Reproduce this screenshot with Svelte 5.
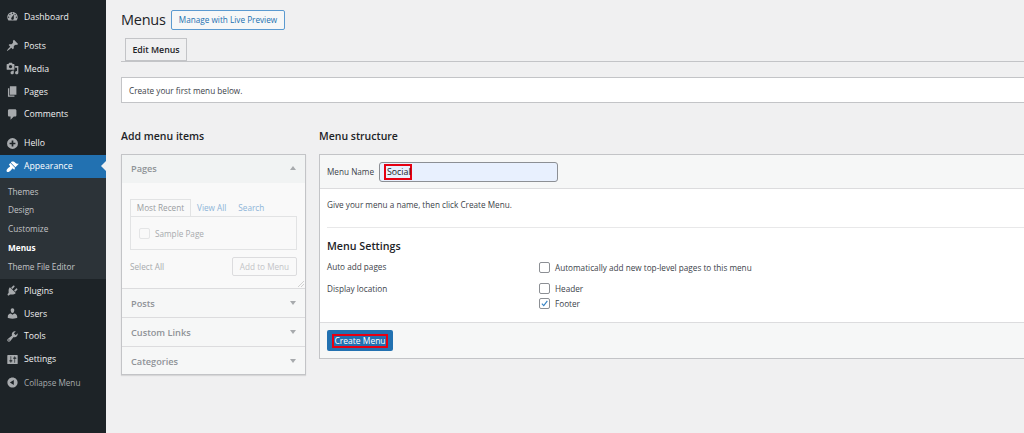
<script>
  const icons = {
    dashboard: 'M3.76 16h12.48c1.1-1.37 1.76-3.11 1.76-5 0-4.42-3.58-8-8-8s-8 3.58-8 8c0 1.89.66 3.63 1.76 5zM10 4c.55 0 1 .45 1 1s-.45 1-1 1-1-.45-1-1 .45-1 1-1zM6 6c.55 0 1 .45 1 1s-.45 1-1 1-1-.45-1-1 .45-1 1-1zm8 0c.55 0 1 .45 1 1s-.45 1-1 1-1-.45-1-1 .45-1 1-1zm-5.37 5.55L12 7v6c0 1.1-.9 2-2 2s-2-.9-2-2c0-.57.24-1.08.63-1.45zM4 10c.55 0 1 .45 1 1s-.45 1-1 1-1-.45-1-1 .45-1 1-1zm12 0c.55 0 1 .45 1 1s-.45 1-1 1-1-.45-1-1 .45-1 1-1z',
    posts: 'M10.44 3.02l1.82-1.82 6.36 6.35-1.83 1.82c-1.05-.68-2.48-.57-3.41.36l-.75.75c-.92.93-1.04 2.35-.35 3.41l-1.83 1.82-2.41-2.41-2.8 2.79c-.42.42-3.38 2.71-3.8 2.29s1.86-3.39 2.28-3.81l2.79-2.79L4.1 9.36l1.83-1.82c1.05.69 2.48.57 3.4-.36l.75-.75c.93-.92 1.05-2.35.36-3.41z',
    media: 'M13 11V4c0-.55-.45-1-1-1h-1.67L9 1H5L3.67 3H2c-.55 0-1 .45-1 1v7c0 .55.45 1 1 1h10c.55 0 1-.45 1-1zM7 4.5c1.38 0 2.5 1.12 2.5 2.5S8.38 9.5 7 9.5 4.5 8.38 4.5 7 5.62 4.5 7 4.5zM14 6h5v10.5c0 1.38-1.12 2.5-2.5 2.5S14 17.88 14 16.5s1.12-2.5 2.5-2.5c.17 0 .34.02.5.05V9h-3V6zm-4 8.05V13h2v3.5c0 1.38-1.12 2.5-2.5 2.5S7 17.88 7 16.5 8.12 14 9.5 14c.17 0 .34.02.5.05z',
    pages: 'M6 15V2h10v13H6zm-1 1h8v2H3V5h2v11z',
    comments: 'M5 2h9c1.1 0 2 .9 2 2v7c0 1.1-.9 2-2 2h-2l-5 5v-5H5c-1.1 0-2-.9-2-2V4c0-1.1.9-2 2-2z',
    hello: 'M10 1.6a8.4 8.4 0 1 0 0 16.8 8.4 8.4 0 0 0 0-16.8zM14.5 11.3h-3.2v3.2H8.7v-3.2H5.5V8.7h3.2V5.5h2.6v3.2h3.2z',
    appearance: 'M14.48 11.06L7.41 3.99l1.5-1.5c.5-.56 2.3-.47 3.51.32 1.21.8 1.43 1.28 2.91 2.1 1.18.64 2.45 1.26 4.45.85zm-.71.71L6.7 4.7 4.93 6.47c-.39.39-.39 1.02 0 1.41l1.06 1.06c.39.39.39 1.03 0 1.42-.6.6-1.43 1.11-2.21 1.69-.35.26-.7.53-1.01.84C1.43 13.73 0 16.5 1.41 17.91s4.18-.02 5.52-1.36c.31-.31.58-.66.84-1.01.58-.78 1.09-1.61 1.69-2.21.39-.39 1.02-.39 1.41 0l1.06 1.06c.39.39 1.02.39 1.41 0z',
    plugins: 'M13.11 4.36L9.87 7.6 8 5.73l3.24-3.24c.35-.34 1.05-.2 1.56.32.52.51.66 1.21.31 1.55zm-8 1.77l.91-1.12 9.01 9.01-1.19.84c-.71.71-2.63 1.16-3.82 1.16H6.14L4.9 17.26c-.59.59-1.54.59-2.12 0-.59-.58-.59-1.53 0-2.12l1.24-1.24v-3.88c0-1.13.4-3.19 1.09-3.89zm7.26 3.97l3.24-3.24c.34-.35 1.04-.21 1.55.31.52.51.66 1.21.31 1.55l-3.24 3.25z',
    users: 'M10 9.25c-2.27 0-2.73-3.44-2.73-3.44C7 4.02 7.82 2 9.97 2c2.16 0 2.98 2.02 2.71 3.81 0 0-.41 3.44-2.68 3.44zm0 2.57L12.72 10c2.39 0 4.52 2.33 4.52 4.53v2.49s-3.65 1.13-7.24 1.13c-3.65 0-7.24-1.13-7.24-1.13v-2.49c0-2.25 1.94-4.48 4.47-4.48z',
    tools: 'M16.68 9.77c-1.34 1.34-3.3 1.67-4.95.99l-5.41 6.52c-.99.99-2.59.99-3.57 0-.99-.98-.99-2.58 0-3.57l6.52-5.42c-.68-1.65-.35-3.61.99-4.95 1.28-1.28 3.12-1.62 4.72-1.06l-2.89 2.89 2.82 2.82 2.86-2.87c.53 1.58.18 3.39-1.09 4.67zM3.81 16.21c.4.39 1.04.39 1.43 0 .4-.4.4-1.04 0-1.43-.39-.4-1.03-.4-1.43 0-.39.39-.39 1.03 0 1.43z',
    settings: 'M18 16V4c0-.55-.45-1-1-1H3c-.55 0-1 .45-1 1v12c0 .55.45 1 1 1h14c.55 0 1-.45 1-1zM8 11h1c.55 0 1 .45 1 1s-.45 1-1 1H8v1.5c0 .28-.22.5-.5.5s-.5-.22-.5-.5V13H6c-.55 0-1-.45-1-1s.45-1 1-1h1V5.5c0-.28.22-.5.5-.5s.5.22.5.5V11zm5-2h-1c-.55 0-1-.45-1-1s.45-1 1-1h1V5.5c0-.28.22-.5.5-.5s.5.22.5.5V7h1c.55 0 1 .45 1 1s-.45 1-1 1h-1v5.5c0 .28-.22.5-.5.5s-.5-.22-.5-.5V9z',
    collapse: 'M10 2.16c4.33 0 7.84 3.51 7.84 7.84s-3.51 7.84-7.84 7.84-7.84-3.51-7.84-7.84S5.67 2.16 10 2.16zM12 14V6l-6 4z'
  }

  const topItems = [
    { name: 'Dashboard', icon: 'dashboard', gap: true },
    { name: 'Posts', icon: 'posts' },
    { name: 'Media', icon: 'media' },
    { name: 'Pages', icon: 'pages' },
    { name: 'Comments', icon: 'comments', gap: true },
    { name: 'Hello', icon: 'hello' }
  ]
  const subItems = ['Themes', 'Design', 'Customize', 'Menus', 'Theme File Editor']
  const bottomItems = [
    { name: 'Plugins', icon: 'plugins' },
    { name: 'Users', icon: 'users' },
    { name: 'Tools', icon: 'tools' },
    { name: 'Settings', icon: 'settings' }
  ]
</script>

{#snippet icon(name)}
  <svg class="icon" viewBox="0 0 20 20"><path fill-rule="evenodd" d={icons[name]} /></svg>
{/snippet}

<main class="page">
  <nav class="sidebar">
    {#each topItems as item}
      <div class="item" class:gap={item.gap}>{@render icon(item.icon)}<span>{item.name}</span></div>
    {/each}
    <div class="item active">{@render icon('appearance')}<span>Appearance</span></div>
    <div class="submenu">
      {#each subItems as sub}
        <div class="sub" class:current={sub === 'Menus'}>{sub}</div>
      {/each}
    </div>
    {#each bottomItems as item}
      <div class="item">{@render icon(item.icon)}<span>{item.name}</span></div>
    {/each}
    <div class="item collapse">{@render icon('collapse')}<span>Collapse Menu</span></div>
  </nav>

  <section class="content">
    <header class="title">
      <h1>Menus</h1>
      <button class="preview">Manage with Live Preview</button>
    </header>

    <div class="tabs"><span class="tab">Edit Menus</span></div>

    <div class="notice">Create your first menu below.</div>

    <div class="columns">
      <div class="left">
        <h2>Add menu items</h2>
        <div class="accordion">
          <div class="acc-head open"><span>Pages</span><i class="arrow up"></i></div>
          <div class="acc-body">
            <div class="mini-tabs">
              <span class="mini-tab">Most Recent</span>
              <span class="mini-link">View All</span>
              <span class="mini-link">Search</span>
            </div>
            <div class="mini-box"><i class="check faint"></i><span>Sample Page</span></div>
            <div class="mini-foot">
              <span>Select All</span>
              <span class="add">Add to Menu</span>
            </div>
            <svg class="resize" viewBox="0 0 6 6"><path d="M0 6L6 0M3 6L6 3" stroke="#b5b5b5" stroke-width=".6" /></svg>
          </div>
          <div class="acc-head"><span>Posts</span><i class="arrow"></i></div>
          <div class="acc-head"><span>Custom Links</span><i class="arrow"></i></div>
          <div class="acc-head last"><span>Categories</span><i class="arrow"></i></div>
        </div>
      </div>

      <div class="right">
        <h2>Menu structure</h2>
        <div class="panel">
          <div class="name-row">
            <span class="name-label">Menu Name</span>
            <div class="name-input"><span class="mark">Social</span></div>
          </div>
          <div class="panel-body">
            <p class="hint">Give your menu a name, then click Create Menu.</p>
            <h3>Menu Settings</h3>
            <div class="setting">
              <span class="setting-label">Auto add pages</span>
              <label class="opt"><i class="check"></i>Automatically add new top-level pages to this menu</label>
            </div>
            <div class="setting second">
              <span class="setting-label">Display location</span>
              <div class="opts">
                <label class="opt"><i class="check"></i>Header</label>
                <label class="opt">
                  <i class="check">
                    <svg viewBox="0 0 12 12"><path d="M2.5 6.2L5 8.8L9.8 2.6" fill="none" stroke="#3582c4" stroke-width="1.5" /></svg>
                  </i>Footer
                </label>
              </div>
            </div>
          </div>
          <div class="panel-foot">
            <button class="create"><span class="mark-btn">Create Menu</span></button>
          </div>
        </div>
      </div>
    </div>
  </section>
</main>

<style>
  :global(body) {
    background: #f0f0f1;
  }

  .page {
    display: flex;
    width: 1024px;
    height: 433px;
    overflow: hidden;
    background: #f0f0f1;
    color: #3c434a;
    font-family: "Open Sans", "Noto Sans", sans-serif;
    font-size: 8.2px;
  }

  .sidebar {
    flex: none;
    width: 106px;
    padding-top: 5.5px;
    background: #1d2327;
    color: #f0f0f1;
    font-size: 8.7px;
    box-sizing: border-box;
  }

  .item {
    position: relative;
    display: flex;
    align-items: center;
    height: 22.8px;
    padding-left: 6px;
    gap: 5px;
  }

  .item.gap {
    margin-bottom: 6.3px;
  }

  .icon {
    flex: none;
    width: 13px;
    height: 13px;
    fill: #a7aaad;
  }

  .active {
    background: #2271b1;
    color: #fff;
  }

  .active .icon {
    fill: #fff;
  }

  .active::after {
    content: "";
    position: absolute;
    right: 0;
    top: 6px;
    border: 5px solid transparent;
    border-right-color: #f0f0f1;
    border-left-width: 0;
  }

  .submenu {
    background: #2c3338;
    padding: 5px 0 3px;
  }

  .sub {
    height: 18.75px;
    line-height: 18.75px;
    padding-left: 8px;
    font-size: 8.25px;
    color: #c3c4c7;
  }

  .sub.current {
    color: #fff;
    font-weight: 700;
  }

  .collapse {
    color: #a7aaad;
    font-size: 8.2px;
  }

  .content {
    flex: none;
    width: 918px;
    padding-left: 15px;
    box-sizing: border-box;
    overflow: hidden;
  }

  .title {
    display: flex;
    align-items: center;
    height: 19px;
    margin-top: 10px;
  }

  h1 {
    margin: 0;
    width: 50px;
    font-size: 14.5px;
    letter-spacing: -0.25px;
    font-weight: 400;
    color: #1d2327;
  }

  .preview {
    height: 20px;
    width: 114px;
    padding: 0;
    border: 1px solid #5b9ad0;
    border-radius: 2px;
    background: #f6f7f7;
    color: #2271b1;
    font: inherit;
    white-space: nowrap;
  }

  .tabs {
    display: flex;
    height: 23px;
    margin-top: 9px;
    padding-left: 4px;
    border-bottom: 1px solid #c3c4c7;
  }

  .tab {
    width: 62px;
    height: 23px;
    box-sizing: border-box;
    border: 1px solid #c3c4c7;
    background: #f0f0f1;
    font-weight: 600;
    font-size: 8.8px;
    color: #1d2327;
    text-align: center;
    line-height: 23px;
  }

  .notice {
    height: 26px;
    margin-top: 15px;
    box-sizing: border-box;
    padding-left: 7px;
    background: #fff;
    border: 1px solid #c3c4c7;
    border-right: 0;
    line-height: 26px;
  }

  .columns {
    display: flex;
    gap: 13px;
    margin-top: 25px;
  }

  h2 {
    margin: 0 0 9px;
    height: 17px;
    line-height: 17px;
    font-size: 10.5px;
    font-weight: 600;
    color: #1d2327;
  }

  .left {
    flex: none;
    width: 185px;
  }

  .accordion {
    border: 1px solid #c3c4c7;
    background: #f6f7f7;
    box-shadow: 0 1px 1px rgba(0, 0, 0, 0.1);
    box-sizing: border-box;
    height: 221px;
    color: #8f9397;
  }

  .acc-head {
    display: flex;
    justify-content: space-between;
    align-items: center;
    height: 28px;
    padding: 0 9px;
    border-bottom: 1px solid #dcdcde;
    font-weight: 600;
    font-size: 9.2px;
    box-sizing: content-box;
  }

  .acc-head.open {
    background: #f1f3f3;
    border-bottom: 0;
    height: 26px;
    padding-bottom: 2px;
  }

  .acc-head.last {
    border-bottom: 0;
  }

  .arrow {
    width: 0;
    height: 0;
    border: 3px solid transparent;
    border-top: 4px solid #a7aaad;
    border-bottom: 0;
  }

  .arrow.up {
    border-top: 0;
    border-bottom: 4px solid #a7aaad;
  }

  .acc-body {
    position: relative;
    height: 106px;
    padding: 16px 8px 0;
    box-sizing: border-box;
    border-bottom: 1px solid #dcdcde;
    background: #f9f9f9;
  }

  .mini-tabs {
    display: flex;
    align-items: center;
    height: 17px;
    color: #8db4d8;
  }

  .mini-tab {
    width: 61px;
    height: 17px;
    line-height: 16px;
    box-sizing: border-box;
    border: 1px solid #e2e3e4;
    border-bottom: 0;
    text-align: center;
    color: #9a9da1;
  }

  .mini-link {
    margin-left: 6px;
    margin-right: 6px;
  }

  .mini-box {
    display: flex;
    align-items: center;
    gap: 5px;
    height: 34px;
    padding-left: 8px;
    box-sizing: border-box;
    border: 1px solid #e2e3e4;
    color: #a7aaad;
  }

  .mini-foot {
    display: flex;
    justify-content: space-between;
    align-items: center;
    margin-top: 7px;
    color: #a7aaad;
  }

  .add {
    width: 65px;
    height: 19px;
    line-height: 18px;
    box-sizing: border-box;
    border: 1px solid #dcdcde;
    border-radius: 2px;
    text-align: center;
    color: #c3c4c7;
  }

  .resize {
    position: absolute;
    right: 1px;
    bottom: 1px;
    width: 6px;
    height: 6px;
  }

  .check {
    display: inline-block;
    flex: none;
    width: 11px;
    height: 11px;
    box-sizing: border-box;
    border: 1px solid #8c8f94;
    border-radius: 2px;
    background: #fff;
  }

  .check svg {
    display: block;
    width: 9px;
    height: 9px;
  }

  .check.faint {
    border-color: #e4e5e6;
    background: #f9f9f9;
  }

  .right {
    flex: none;
    width: 705px;
  }

  .panel {
    height: 205px;
    box-sizing: border-box;
    display: flex;
    flex-direction: column;
    background: #fff;
    border: 1px solid #c3c4c7;
    border-right: 0;
  }

  .name-row {
    display: flex;
    align-items: center;
    height: 34px;
    padding-left: 7px;
    box-sizing: border-box;
    background: #f6f7f7;
    border-bottom: 1px solid #dcdcde;
  }

  .name-label {
    width: 52px;
  }

  .name-input {
    width: 179px;
    height: 20px;
    box-sizing: border-box;
    padding-left: 4px;
    display: flex;
    align-items: center;
    background: #e8f0fe;
    border: 1px solid #8c8f94;
    border-radius: 3px;
    color: #1d2327;
    font-size: 8.8px;
  }

  .mark {
    display: block;
    width: 28px;
    height: 16px;
    line-height: 12px;
    padding-left: 1px;
    box-sizing: border-box;
    border: 2px solid #e60012;
  }

  .panel-body {
    flex: 1;
    padding-left: 7px;
  }

  .hint {
    margin: 0;
    height: 39px;
    padding-top: 9px;
    box-sizing: border-box;
    line-height: 14px;
    border-bottom: 1px solid #e8e8e9;
  }

  h3 {
    margin: 11px 0 0;
    height: 15px;
    line-height: 15px;
    font-size: 10.7px;
    font-weight: 600;
    color: #1d2327;
  }

  .setting {
    display: flex;
    margin-top: 7px;
  }

  .setting.second {
    margin-top: 9px;
  }

  .setting-label {
    width: 212px;
    line-height: 12px;
  }

  .second .setting-label {
    padding-top: 1px;
  }

  .opts {
    display: flex;
    flex-direction: column;
    gap: 3px;
    padding-top: 0;
  }

  .opt {
    display: flex;
    align-items: center;
    gap: 5px;
    height: 12px;
  }

  .panel-foot {
    flex: none;
    height: 36px;
    padding: 7px 7px 0;
    box-sizing: border-box;
    background: #f6f7f7;
    border-top: 1px solid #dcdcde;
  }

  .create {
    display: flex;
    align-items: center;
    justify-content: center;
    width: 66px;
    height: 21px;
    padding: 0;
    border: 0;
    border-radius: 2px;
    background: #2271b1;
    color: #fff;
    font: inherit;
    font-size: 8.5px;
  }

  .mark-btn {
    display: block;
    width: 56px;
    height: 14px;
    line-height: 10px;
    text-align: center;
    box-sizing: border-box;
    border: 2px solid #e60012;
    white-space: nowrap;
  }
</style>
